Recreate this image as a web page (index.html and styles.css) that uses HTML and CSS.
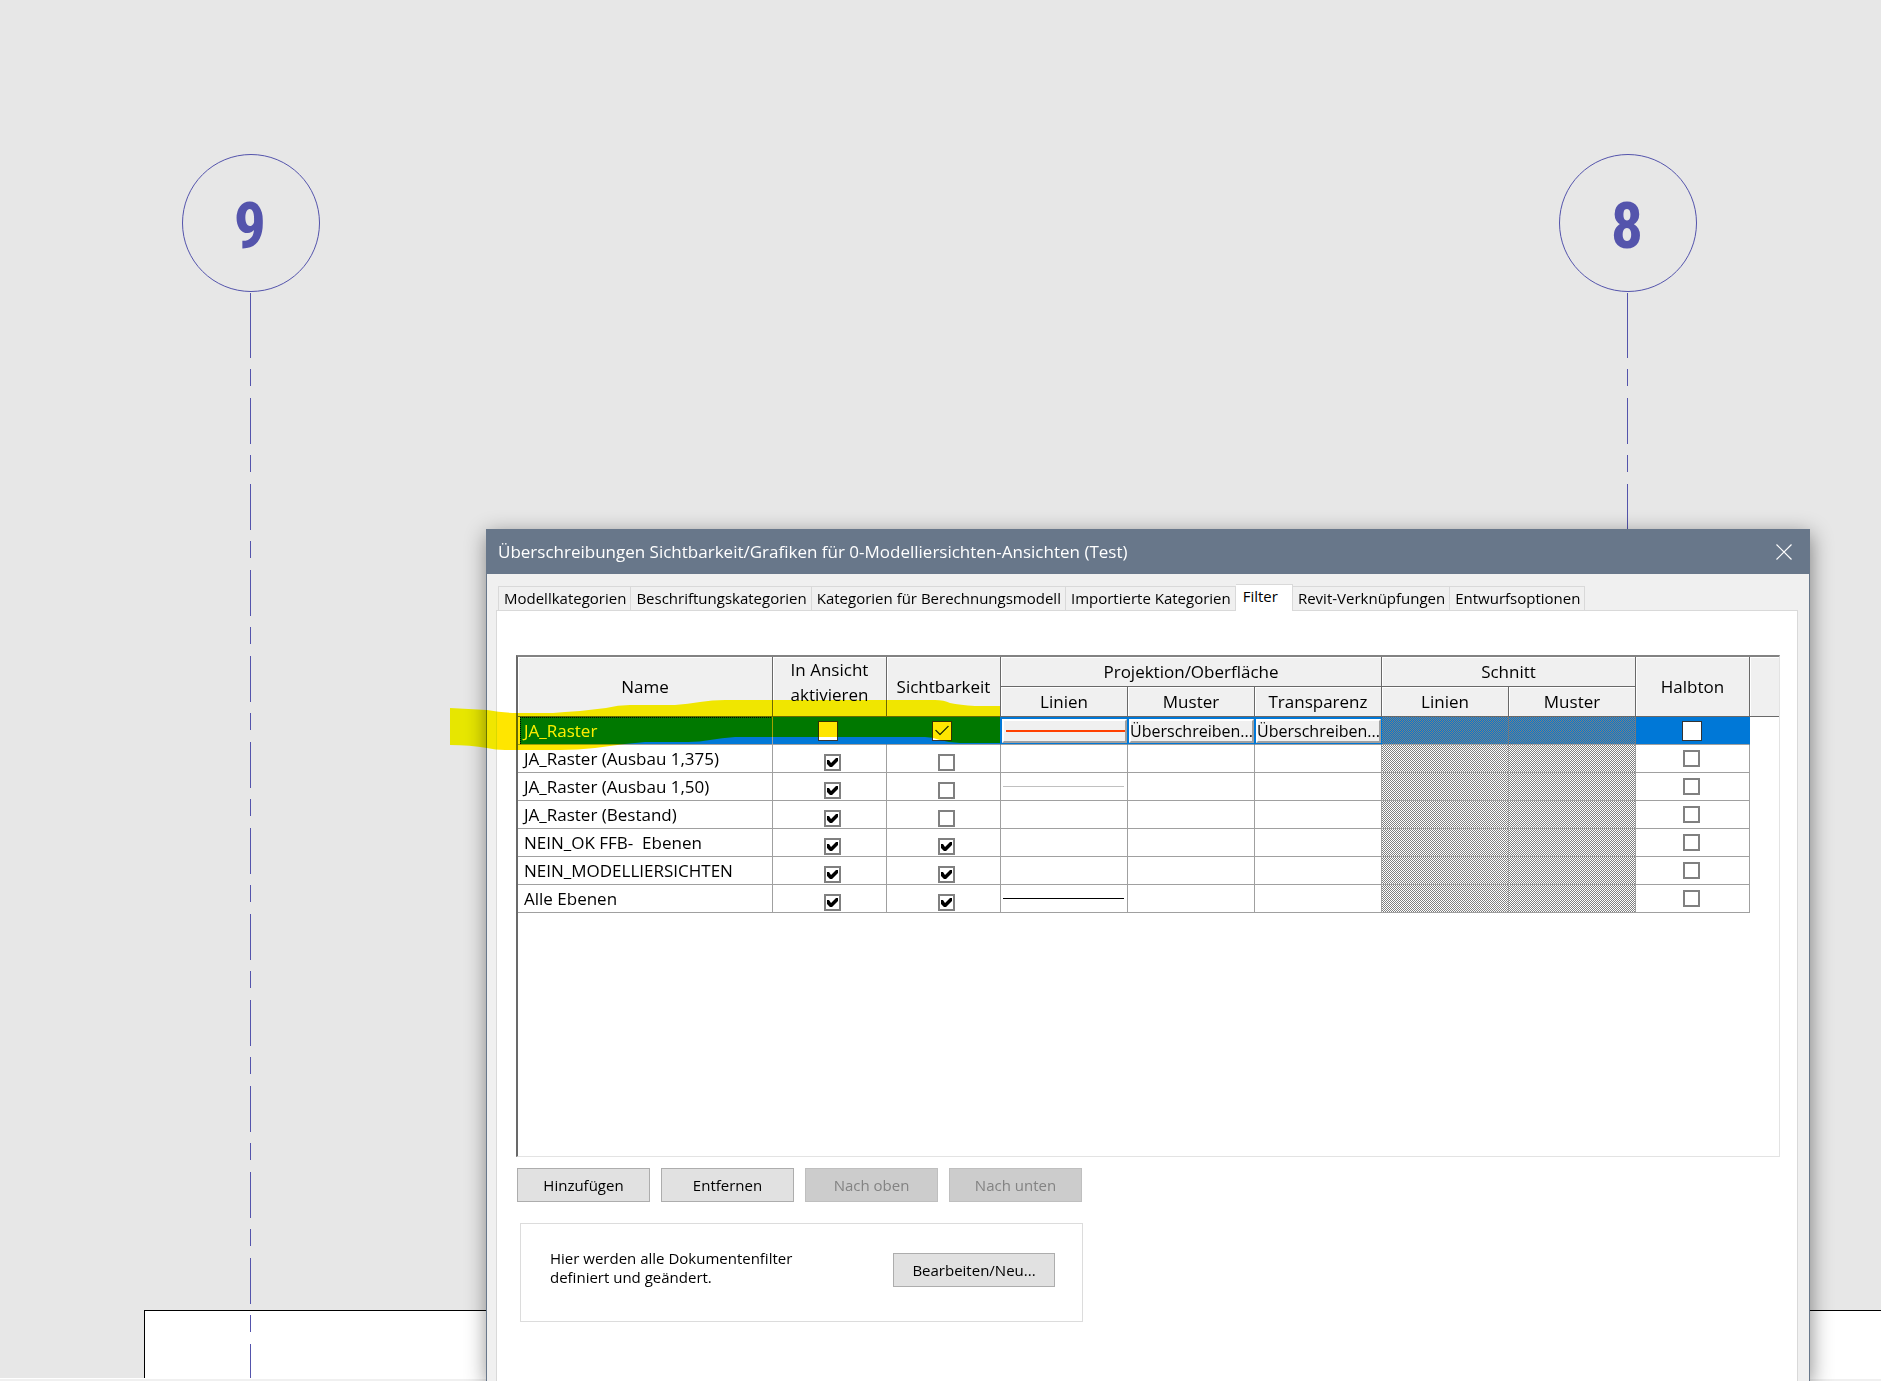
FILE: index.html
```html
<!DOCTYPE html>
<html lang="de">
<head>
<meta charset="utf-8">
<meta name="viewport" content="width=device-width, initial-scale=1">
<title>Überschreibungen Sichtbarkeit/Grafiken</title>
<link rel="stylesheet" href="styles.css">
</head>
<body>
<main class="canvas">
  <div class="sheet"></div>
  <div class="axis axis-9"><span class="axis-head">9</span><span class="axis-line"></span></div>
  <div class="axis axis-8"><span class="axis-head">8</span><span class="axis-line"></span></div>
  <div class="scroll-edge"></div>

  <section class="dialog" role="dialog" aria-labelledby="dialog-title">
    <header class="titlebar">
      <h1 id="dialog-title">Überschreibungen Sichtbarkeit/Grafiken für 0-Modelliersichten-Ansichten (Test)</h1>
      <button class="close" type="button" aria-label="Schließen">
        <svg width="16" height="16" viewBox="0 0 16 16" aria-hidden="true"><path d="M.5 .5L15.500 15.500M15.500 .5L.5 15.500" stroke="#fff" stroke-width="1.2" fill="none"/></svg>
      </button>
    </header>
    <div class="dialog-body">
      <div class="tabs" role="tablist">
        <button class="tab" role="tab" type="button">Modellkategorien</button>
        <button class="tab" role="tab" type="button">Beschriftungskategorien</button>
        <button class="tab" role="tab" type="button">Kategorien für Berechnungsmodell</button>
        <button class="tab" role="tab" type="button">Importierte Kategorien</button>
        <button class="tab active" role="tab" type="button" aria-selected="true">Filter</button>
        <button class="tab" role="tab" type="button">Revit-Verknüpfungen</button>
        <button class="tab" role="tab" type="button">Entwurfsoptionen</button>
      </div>
      <div class="panel" role="tabpanel">
        <div class="grid">
          <table>
            <colgroup>
              <col class="c-name"><col class="c-check"><col class="c-check">
              <col class="c-style"><col class="c-style"><col class="c-style"><col class="c-style"><col class="c-style">
              <col class="c-check"><col>
            </colgroup>
            <thead>
              <tr>
                <th rowspan="2">Name</th>
                <th rowspan="2" class="two-line">In Ansicht aktivieren</th>
                <th rowspan="2">Sichtbarkeit</th>
                <th colspan="3">Projektion/Oberfläche</th>
                <th colspan="2">Schnitt</th>
                <th rowspan="2">Halbton</th>
                <td rowspan="2" class="filler"></td>
              </tr>
              <tr>
                <th>Linien</th><th>Muster</th><th>Transparenz</th><th>Linien</th><th>Muster</th>
              </tr>
            </thead>
            <tbody>
              <tr class="selected">
                <td class="name">JA_Raster</td>
                <td class="check"><input type="checkbox" aria-label="JA_Raster in Ansicht aktivieren"></td>
                <td class="check"><input type="checkbox" checked aria-label="JA_Raster Sichtbarkeit"></td>
                <td class="override"><button type="button" aria-label="Linien überschreiben"><span class="line line-red"></span></button></td>
                <td class="override"><button type="button">Überschreiben...</button></td>
                <td class="override"><button type="button">Überschreiben...</button></td>
                <td class="off"></td><td class="off"></td>
                <td class="half"><input type="checkbox" aria-label="JA_Raster Halbton"></td>
                <td class="rest"></td>
              </tr>
              <tr>
                <td class="name">JA_Raster (Ausbau 1,375)</td>
                <td class="check"><input type="checkbox" checked aria-label="Ausbau 1,375 in Ansicht aktivieren"></td>
                <td class="check"><input type="checkbox" aria-label="Ausbau 1,375 Sichtbarkeit"></td>
                <td></td><td></td><td></td><td class="off"></td><td class="off"></td>
                <td class="half"><input type="checkbox" aria-label="Ausbau 1,375 Halbton"></td>
                <td class="rest"></td>
              </tr>
              <tr>
                <td class="name">JA_Raster (Ausbau 1,50)</td>
                <td class="check"><input type="checkbox" checked aria-label="Ausbau 1,50 in Ansicht aktivieren"></td>
                <td class="check"><input type="checkbox" aria-label="Ausbau 1,50 Sichtbarkeit"></td>
                <td class="sample"><span class="line line-grey"></span></td><td></td><td></td><td class="off"></td><td class="off"></td>
                <td class="half"><input type="checkbox" aria-label="Ausbau 1,50 Halbton"></td>
                <td class="rest"></td>
              </tr>
              <tr>
                <td class="name">JA_Raster (Bestand)</td>
                <td class="check"><input type="checkbox" checked aria-label="Bestand in Ansicht aktivieren"></td>
                <td class="check"><input type="checkbox" aria-label="Bestand Sichtbarkeit"></td>
                <td></td><td></td><td></td><td class="off"></td><td class="off"></td>
                <td class="half"><input type="checkbox" aria-label="Bestand Halbton"></td>
                <td class="rest"></td>
              </tr>
              <tr>
                <td class="name">NEIN_OK FFB-&nbsp; Ebenen</td>
                <td class="check"><input type="checkbox" checked aria-label="NEIN_OK FFB in Ansicht aktivieren"></td>
                <td class="check"><input type="checkbox" checked aria-label="NEIN_OK FFB Sichtbarkeit"></td>
                <td></td><td></td><td></td><td class="off"></td><td class="off"></td>
                <td class="half"><input type="checkbox" aria-label="NEIN_OK FFB Halbton"></td>
                <td class="rest"></td>
              </tr>
              <tr>
                <td class="name">NEIN_MODELLIERSICHTEN</td>
                <td class="check"><input type="checkbox" checked aria-label="NEIN_MODELLIERSICHTEN in Ansicht aktivieren"></td>
                <td class="check"><input type="checkbox" checked aria-label="NEIN_MODELLIERSICHTEN Sichtbarkeit"></td>
                <td></td><td></td><td></td><td class="off"></td><td class="off"></td>
                <td class="half"><input type="checkbox" aria-label="NEIN_MODELLIERSICHTEN Halbton"></td>
                <td class="rest"></td>
              </tr>
              <tr>
                <td class="name">Alle Ebenen</td>
                <td class="check"><input type="checkbox" checked aria-label="Alle Ebenen in Ansicht aktivieren"></td>
                <td class="check"><input type="checkbox" checked aria-label="Alle Ebenen Sichtbarkeit"></td>
                <td class="sample"><span class="line line-black"></span></td><td></td><td></td><td class="off"></td><td class="off"></td>
                <td class="half"><input type="checkbox" aria-label="Alle Ebenen Halbton"></td>
                <td class="rest"></td>
              </tr>
            </tbody>
          </table>
        </div>
        <div class="actions">
          <button class="btn" type="button">Hinzufügen</button>
          <button class="btn" type="button">Entfernen</button>
          <button class="btn" type="button" disabled>Nach oben</button>
          <button class="btn" type="button" disabled>Nach unten</button>
        </div>
        <div class="group">
          <p>Hier werden alle Dokumentenfilter definiert und geändert.</p>
          <button class="btn btn-wide" type="button">Bearbeiten/Neu...</button>
        </div>
      </div>
    </div>
  </section>

  <svg class="marker" width="550" height="50" viewBox="0 0 550 50" aria-hidden="true">
    <path fill="#ffe600" d="M0 8L37 10Q52 13 67 13H103L115 12L130 11L156 8Q168 5 180 5H225Q238 4 250 2Q262 0 275 0H485Q494 0 500 3Q510 5 525 6H550V43H510Q500 43 490 40Q482 37 475 37H285Q272 38 260 40Q250 42 238 42H195L175 44Q160 46 145 48Q128 50 110 50H55Q45 50 37 48Q20 45 0 45Z"/>
  </svg>
</main>
</body>
</html>
```

FILE: styles.css
```css
* { box-sizing: border-box; }

body {
  margin: 0;
  font-family: "Open Sans", "Noto Sans", sans-serif;
  font-size: 17px;
  color: #000;
  background: #e7e7e7;
}

button, input { font: inherit; color: inherit; margin: 0; }

/* drawing area */
.canvas {
  position: relative;
  min-height: 100vh;
  background: #e7e7e7;
  overflow: hidden;
}

.sheet {
  position: absolute;
  top: 1310px;
  left: 144px;
  right: 0;
  bottom: 3px;
  background: #fff;
  border: solid #000;
  border-width: 1px 0 0 1px;
}

.scroll-edge {
  position: absolute;
  left: 0;
  right: 0;
  bottom: 0;
  height: 3px;
  background: #f0f0f0;
  border-top: 1px solid #fff;
}

.axis {
  position: absolute;
  top: 154px;
  bottom: 3px;
  width: 138px;
  display: flex;
  flex-direction: column;
  align-items: center;
  color: #5454ac;
}
.axis-9 { left: 182px; }
.axis-8 { left: 1559px; }

.axis-head {
  width: 100%;
  height: 138px;
  flex: none;
  display: flex;
  align-items: center;
  justify-content: center;
  padding: 8px 2px 0 0;
  border: 1px solid #5454ac;
  border-radius: 50%;
  font-family: "Liberation Sans Narrow", "Roboto Condensed", "Liberation Sans", sans-serif;
  font-weight: 700;
  font-size: 64px;
  line-height: 64px;
}

.axis-line {
  flex: 1;
  width: 1px;
  margin: 1px 1px 0 0;
  background:
    linear-gradient(#5454ac, #5454ac) 0 0 / 1px 19px no-repeat,
    linear-gradient(#5454ac 46px, transparent 46px 57px, #5454ac 57px 74px, transparent 74px) 0 19px / 1px 86px repeat-y;
}

/* dialog window */
.dialog {
  position: absolute;
  top: 529px;
  left: 486px;
  right: 71px;
  bottom: 0;
  display: flex;
  flex-direction: column;
  background: #f0f0f0;
  border: 1px solid #68778a;
  border-bottom: 0;
  box-shadow: 1px 5px 20px rgba(0, 0, 0, .45);
}

.titlebar {
  height: 44px;
  flex: none;
  display: flex;
  align-items: center;
  justify-content: space-between;
  padding: 0 17px 0 11px;
  background: #68778a;
  color: #fff;
}
.titlebar h1 { margin: 0; font-size: 17px; font-weight: 400; line-height: 24px; }

.close {
  display: flex;
  padding: 0;
  border: 0;
  background: none;
}

.dialog-body {
  flex: 1;
  display: flex;
  flex-direction: column;
  padding: 10px 11px 0 9px;
}

.tabs {
  display: flex;
  align-items: flex-end;
  height: 26px;
  padding-left: 2px;
  font-size: 15px;
}
.tab {
  height: 24px;
  padding: 0 4px 1px 5px;
  border: 1px solid #d9d9d9;
  border-width: 1px 1px 0 0;
  background: #f0f0f0;
  line-height: 22px;
  white-space: nowrap;
}
.tab:first-child { border-left-width: 1px; }
.tab.active {
  height: 27px;
  margin-bottom: -1px;
  padding: 0 14px 4px 7px;
  background: #fff;
  z-index: 1;
}

.panel {
  flex: 1;
  padding: 44px 17px 0 19px;
  background: #fff;
  border: 1px solid #d9d9d9;
  border-bottom: 0;
}

/* filter list */
.grid {
  height: 502px;
  border: 2px solid #696969;
  border-top-color: #828282;
  border-right: 1px solid #e3e3e3;
  border-bottom: 1px solid #e3e3e3;
}

table {
  width: 100%;
  table-layout: fixed;
  border-collapse: separate;
  border-spacing: 0;
}
.c-name { width: 255px; }
.c-check { width: 114px; }
.c-style { width: 127px; }

th, .filler {
  height: 30px;
  padding: 0 8px;
  background: #f0f0f0;
  border: solid #696969;
  border-width: 0 1px 1px 0;
  box-shadow: inset 1px 1px #fff;
  font-weight: 400;
  line-height: 25px;
}
.filler { border-right: 0; }
.two-line { padding-bottom: 9px; }

tbody td {
  height: 28px;
  padding: 0;
  border: solid #a0a0a0;
  border-width: 0 1px 1px 0;
  line-height: 24px;
  vertical-align: middle;
  white-space: nowrap;
}
tbody .name { padding-left: 6px; }
tbody .rest { border: 0; }
tbody .off {
  background: conic-gradient(#808080 25%, #fff 25% 50%, #808080 50% 75%, #fff 75%) 0 0 / 2px 2px;
}

tbody .check { padding: 8px 0 0 6px; }
tbody .half { padding-right: 2px; }

input[type="checkbox"] {
  appearance: none;
  display: block;
  width: 17px;
  height: 17px;
  margin: 0 auto;
  background: #fff;
  border: 2px solid #808080;
}
input[type="checkbox"]::before {
  content: "";
  display: none;
  width: 13px;
  height: 13px;
  background: #000;
  clip-path: polygon(1px 4px, 3px 4px, 5px 7px, 10px 2px, 12px 2px, 12px 5px, 6px 11px, 4px 11px, 1px 8px);
}
input[type="checkbox"]:checked::before { display: block; }

.line { display: block; height: 1px; margin: 0 3px 0 2px; }
.line-grey { background: #c0c0c0; }
.line-black { background: #000; }
.override .line-red { flex: 1; height: 2px; margin: 0 0 0 2px; background: #ff4000; }

.selected td { background: #0078d7; border-right-color: #0078d7; }
.selected .name {
  background:
    repeating-linear-gradient(90deg, #000 0 1px, transparent 1px 2px) 2px 0 / 100% 1px no-repeat,
    repeating-linear-gradient(#000 0 1px, transparent 1px 2px) 2px 0 / 1px 100% no-repeat,
    linear-gradient(90deg, #fff 2px, #0078d7 2px);
  border-right-color: #a0a0a0;
  color: #fff;
}
.selected .off {
  background: conic-gradient(#808080 25%, #0078d7 25% 50%, #808080 50% 75%, #0078d7 75%) 0 0 / 2px 2px;
  border-right-color: #707880;
}
.selected .rest { background: none; }
.selected .check { padding: 0 3px 0 0; }
.selected input[type="checkbox"] { width: 20px; height: 20px; border: 1px solid #333; }
.selected input[type="checkbox"]::before {
  width: 18px;
  height: 18px;
  background: #333;
  clip-path: polygon(2px 9px, 3px 8px, 7px 12px, 15px 4px, 16px 5px, 7px 14px);
}

.selected .override { padding: 0 0 0 1px; }
.override button {
  display: flex;
  align-items: center;
  justify-content: center;
  width: 100%;
  height: 24px;
  padding: 0;
  background: #f0f0f0;
  border: 2px solid;
  border-color: #fff #a0a0a0 #a0a0a0 #fff;
  font-size: 16px;
  line-height: 20px;
}

/* buttons below the list */
.actions { display: flex; gap: 11px; padding: 11px 0 0 1px; }
.btn {
  width: 133px;
  height: 34px;
  padding: 0 0 1px;
  background: #e1e1e1;
  border: 1px solid #adadad;
  font-size: 15px;
}
.btn:disabled { background: #ccc; border-color: #bfbfbf; color: #838383; }
.btn-wide { width: 162px; flex: none; margin-top: 4px; }

.group {
  display: flex;
  align-items: flex-start;
  justify-content: space-between;
  width: 563px;
  height: 99px;
  margin: 21px 0 0 4px;
  padding: 25px 27px 0 29px;
  border: 1px solid #dcdcdc;
  font-size: 15px;
}
.group p { width: 256px; margin: 0; line-height: 19px; }

/* highlighter stroke over the first row */
.marker {
  position: absolute;
  top: 700px;
  left: 450px;
  mix-blend-mode: darken;
  pointer-events: none;
}
```
